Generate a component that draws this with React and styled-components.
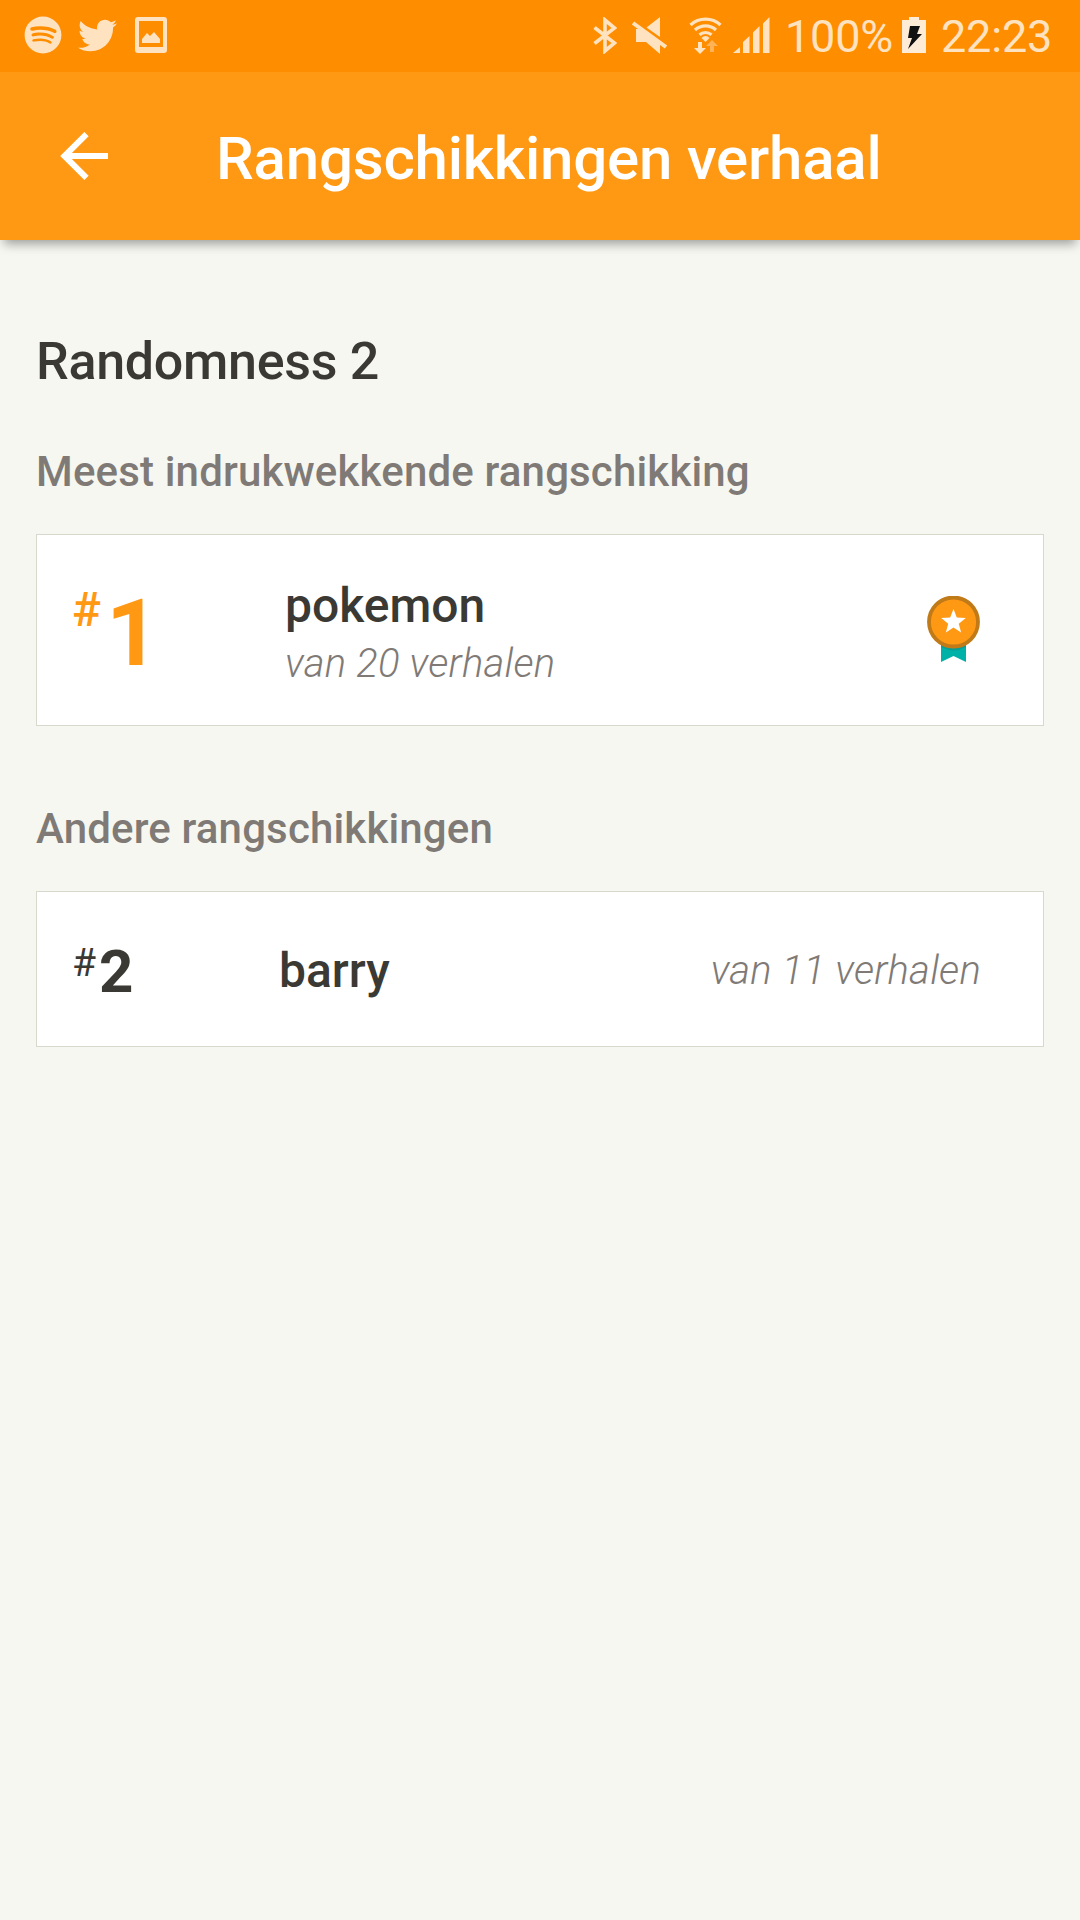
import React from 'react';
import styled, { createGlobalStyle } from 'styled-components';
import { FaSpotify, FaTwitter } from 'react-icons/fa';

const GlobalStyle = createGlobalStyle`
  * {
    box-sizing: border-box;
  }
  body {
    margin: 0;
    background: #f6f7f1;
    color: #3b3933;
    font-family: Roboto, 'Liberation Sans', sans-serif;
  }
  svg {
    display: block;
    flex: none;
  }
`;

const Screen = styled.div`
  width: 1080px;
  min-height: 1920px;
  background: #f6f7f1;
`;

const StatusBar = styled.div`
  display: flex;
  justify-content: space-between;
  height: 72px;
  padding: 0 29px 0 24px;
  background: #ff8d00;
  color: #ffe2bf;
`;

const StatusGroup = styled.div`
  display: flex;
  align-items: center;
  height: 70px;
`;

const StatusText = styled.span`
  width: ${props => props.$width}px;
  margin: 4px 0 0 ${props => props.$gap}px;
  font-size: 45px;
  letter-spacing: -0.2px;
  line-height: 60px;
  white-space: nowrap;
`;

const StatusIcon = styled.svg`
  margin-left: ${props => props.$gap || 0}px;
`;

const AppBar = styled.header`
  display: flex;
  align-items: center;
  height: 168px;
  padding-left: 60px;
  background: #ff9914;
  color: #fff;
  box-shadow: 0 8px 10px -4px rgba(0, 0, 0, 0.36);
`;

const Title = styled.h1`
  margin: 5px 0 0 108px;
  font-size: 60px;
  font-weight: 500;
  letter-spacing: -0.2px;
  line-height: 72px;
  white-space: nowrap;
`;

const Content = styled.main`
  padding: 92px 36px 0;
`;

const StoryName = styled.h2`
  margin: 0;
  font-size: 52px;
  font-weight: 500;
  letter-spacing: -0.3px;
  line-height: 60px;
  white-space: nowrap;
`;

const SectionTitle = styled.h3`
  margin: ${props => props.$top}px 0 0;
  color: #807a76;
  font-size: 42px;
  font-weight: 500;
  letter-spacing: 0.16px;
  line-height: 50px;
  white-space: nowrap;
`;

const Card = styled.section`
  display: flex;
  align-items: center;
  height: ${props => props.$height}px;
  margin-top: ${props => props.$top}px;
  padding: 0 62px 0 35px;
  border: 1px solid #d8d9cd;
  background: #fff;
`;

const Rank = styled.div`
  display: flex;
  align-items: flex-start;
  width: ${props => (props.$best ? 213 : 207)}px;
  padding-top: ${props => (props.$best ? 7 : 6)}px;
  color: ${props => (props.$best ? '#ff9914' : 'inherit')};
`;

const Hash = styled.span`
  width: ${props => (props.$best ? 34 : 27)}px;
  font-size: ${props => (props.$best ? 48 : 39)}px;
  font-weight: ${props => (props.$best ? 500 : 400)};
  line-height: ${props => (props.$best ? 47 : 46)}px;
`;

const Position = styled.span`
  font-size: ${props => (props.$best ? 93 : 60)}px;
  font-weight: 700;
  line-height: ${props => (props.$best ? 96 : 64)}px;
`;

const Entry = styled.div`
  flex: 1;
  padding-top: ${props => (props.$best ? 5 : 3)}px;
`;

const Name = styled.div`
  font-size: 48px;
  font-weight: 500;
  line-height: 58px;
`;

const Total = styled.div`
  padding-top: 4px;
  color: #807a76;
  font-size: 40px;
  font-style: italic;
  font-weight: 300;
  letter-spacing: 0.25px;
  line-height: 50px;
  white-space: nowrap;
`;

const GalleryIcon = () => (
  <StatusIcon $gap={18} width="32" height="36" viewBox="0 0 32 36" fill="currentColor">
    <path
      fillRule="evenodd"
      d="M3 0h26a3 3 0 0 1 3 3v30a3 3 0 0 1-3 3H3a3 3 0 0 1-3-3V3a3 3 0 0 1 3-3zM4 4v26h24V4z"
    />
    <path d="M7 26v-4l5-6 3 3 4-4 6 7v4z" />
  </StatusIcon>
);

const BluetoothIcon = () => (
  <StatusIcon width="24" height="37" viewBox="0 0 24 37" fill="none" stroke="currentColor">
    <path d="M1.500 10.500l20 15.500-9.500 8V3l9.500 8-20 15.500" strokeWidth="3.600" />
  </StatusIcon>
);

const MuteIcon = () => (
  <StatusIcon $gap={14} width="37" height="37" viewBox="0 0 37 37" fill="currentColor">
    <path d="M29 0v20L15.500 10.500zM5 12h3l21 14v11L15 25H5z" />
    <path d="M2 6l33 24" stroke="currentColor" strokeWidth="4" />
  </StatusIcon>
);

const WifiIcon = () => (
  <StatusIcon $gap={21} width="34" height="37" viewBox="0 0 34 37" fill="currentColor">
    <g fill="none" stroke="currentColor" strokeWidth="3.200">
      <path d="M1.500 8a22 22 0 0 1 30 0" />
      <path d="M6 13a15.500 15.500 0 0 1 21 0" />
      <path d="M10.500 17.800a9 9 0 0 1 12 0" />
    </g>
    <path d="M12.500 21a5 5 0 0 1 8 0l-4 4z" />
    <path d="M9 25h4v6h4l-6 6-6-6h4z" />
    <path d="M21 35v-6h-4l6-6 6 6h-4v6z" opacity="0.45" />
  </StatusIcon>
);

const SignalIcon = () => (
  <StatusIcon $gap={10} width="37" height="36" viewBox="0 0 37 36" fill="currentColor">
    <path d="M0 36l7-6v6zM10 36V25l6.500-6v17zM20 36V15.500L26.500 9v27zM30 36V6.500L36.500 0v36z" />
  </StatusIcon>
);

const BatteryIcon = () => (
  <StatusIcon $gap={9} width="24" height="36" viewBox="0 0 24 36">
    <path d="M0 3h7V0h10v3h7v33H0z" fill="#ffecd6" />
    <path d="M8 9h10l-3 8h5L6 32l4-11H6z" fill="#111" />
  </StatusIcon>
);

const BackIcon = () => (
  <svg width="48" height="48" viewBox="0 0 48 48" fill="none" stroke="currentColor">
    <path d="M48 24H6M26.500 2.200L4.500 24l22 21.800" strokeWidth="6" />
  </svg>
);

const Medal = () => (
  <svg width="54" height="68" viewBox="0 0 54 68">
    <path d="M14 42h25v24l-12.500-6L14 66z" fill="#00b1a8" />
    <path d="M14 42h25v9a26 26 0 0 1-25 0z" fill="#079d93" />
    <circle cx="26.500" cy="26" r="24.500" fill="#ff9914" stroke="#c17a18" strokeWidth="3.800" />
    <path
      d="M26.500 13l3.300 8.400 9 .6-7 5.700 2.300 8.700-7.600-4.800-7.600 4.800 2.300-8.700-7-5.700 9-.6z"
      fill="#fff"
    />
  </svg>
);

const App = () => (
  <Screen>
    <GlobalStyle />
    <StatusBar>
      <StatusGroup>
        <FaSpotify size={38} />
        <StatusIcon as={FaTwitter} $gap={16} size={39} />
        <GalleryIcon />
      </StatusGroup>
      <StatusGroup>
        <BluetoothIcon />
        <MuteIcon />
        <WifiIcon />
        <SignalIcon />
        <StatusText $gap={15} $width={108}>
          100%
        </StatusText>
        <BatteryIcon />
        <StatusText $gap={15} $width={110}>
          22:23
        </StatusText>
      </StatusGroup>
    </StatusBar>
    <AppBar>
      <BackIcon />
      <Title>Rangschikkingen verhaal</Title>
    </AppBar>
    <Content>
      <StoryName>Randomness 2</StoryName>
      <SectionTitle $top={55}>Meest indrukwekkende rangschikking</SectionTitle>
      <Card $top={37} $height={192}>
        <Rank $best>
          <Hash $best>#</Hash>
          <Position $best>1</Position>
        </Rank>
        <Entry $best>
          <Name>pokemon</Name>
          <Total>van 20 verhalen</Total>
        </Entry>
        <Medal />
      </Card>
      <SectionTitle $top={78}>Andere rangschikkingen</SectionTitle>
      <Card $top={37} $height={156}>
        <Rank>
          <Hash>#</Hash>
          <Position>2</Position>
        </Rank>
        <Entry>
          <Name>barry</Name>
        </Entry>
        <Total>van 11 verhalen</Total>
      </Card>
    </Content>
  </Screen>
);

export default App;
